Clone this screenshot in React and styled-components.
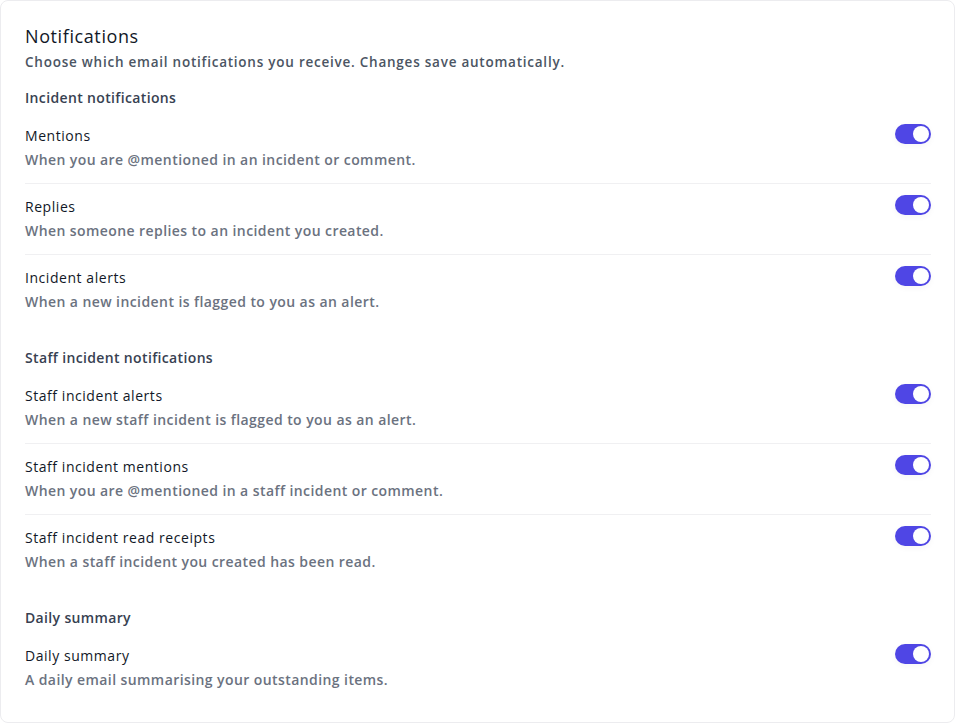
import React, { useState } from "react";
import styled, { createGlobalStyle } from "styled-components";

const Global = createGlobalStyle`
  html, body { margin: 0; padding: 0; background: #ffffff; }
  body { font-family: "Open Sans", "Noto Sans", sans-serif; -webkit-font-smoothing: antialiased; }
  * { box-sizing: border-box; }
`;

const Card = styled.div`
  width: 100%;
  min-height: 723px;
  border: 1px solid #ececef;
  border-radius: 8px;
  background: #fff;
  padding: 23px 23px 19px 24px;
  display: flex;
  flex-direction: column;
`;

const Title = styled.h1`
  margin: 0;
  font-size: 18px;
  line-height: 24px;
  font-weight: 500;
  letter-spacing: 0.6px;
  color: #111827;
`;

const Subtitle = styled.p`
  margin: 4px 0 0;
  font-size: 13.5px;
  line-height: 20px;
  font-weight: 600;
  letter-spacing: 0.76px;
  color: #4b5563;
`;

const Section = styled.section`
  margin-top: ${(p) => (p.$first ? "16px" : "23px")};
  display: flex;
  flex-direction: column;
`;

const SectionTitle = styled.h2`
  margin: 0 0 5px;
  font-size: 14px;
  line-height: 20px;
  font-weight: 600;
  letter-spacing: 0.35px;
  color: #374151;
`;

const Row = styled.div`
  display: flex;
  align-items: flex-start;
  justify-content: space-between;
  gap: 16px;
  padding: 12px 0;
  & + & { border-top: 1px solid #f0f0f2; }
`;

const Text = styled.div`
  display: flex;
  flex-direction: column;
  gap: 2px;
`;

const Label = styled.div`
  font-size: 14px;
  line-height: 22px;
  font-weight: 500;
  letter-spacing: 0.55px;
  color: #111827;
`;

const Desc = styled.div`
  font-size: 14px;
  line-height: 22px;
  font-weight: 600;
  letter-spacing: 0.42px;
  color: #6b7280;
`;

const Track = styled.button`
  flex: none;
  margin-top: -1px;
  width: 36px;
  height: 20px;
  border: none;
  border-radius: 999px;
  padding: 2px;
  background: ${(p) => (p.$on ? "#4f46e5" : "#d1d5db")};
  display: flex;
  justify-content: ${(p) => (p.$on ? "flex-end" : "flex-start")};
  cursor: pointer;
  box-shadow: 0 2px 6px rgba(17, 24, 39, 0.04);
`;

const Knob = styled.span`
  width: 16px;
  height: 16px;
  border-radius: 50%;
  background: #fff;
`;

function Toggle() {
  const [on, setOn] = useState(true);
  return (
    <Track $on={on} onClick={() => setOn(!on)} aria-pressed={on}>
      <Knob />
    </Track>
  );
}

const sections = [
  {
    title: "Incident notifications",
    rows: [
      ["Mentions", "When you are @mentioned in an incident or comment."],
      ["Replies", "When someone replies to an incident you created."],
      ["Incident alerts", "When a new incident is flagged to you as an alert."],
    ],
  },
  {
    title: "Staff incident notifications",
    rows: [
      ["Staff incident alerts", "When a new staff incident is flagged to you as an alert."],
      ["Staff incident mentions", "When you are @mentioned in a staff incident or comment."],
      ["Staff incident read receipts", "When a staff incident you created has been read."],
    ],
  },
  {
    title: "Daily summary",
    rows: [["Daily summary", "A daily email summarising your outstanding items."]],
  },
];

export default function App() {
  return (
    <>
      <Global />
      <Card>
        <Title>Notifications</Title>
        <Subtitle>Choose which email notifications you receive. Changes save automatically.</Subtitle>
        {sections.map((s, i) => (
          <Section key={s.title} $first={i === 0}>
            <SectionTitle>{s.title}</SectionTitle>
            {s.rows.map(([l, d]) => (
              <Row key={l}>
                <Text>
                  <Label>{l}</Label>
                  <Desc>{d}</Desc>
                </Text>
                <Toggle />
              </Row>
            ))}
          </Section>
        ))}
      </Card>
    </>
  );
}
